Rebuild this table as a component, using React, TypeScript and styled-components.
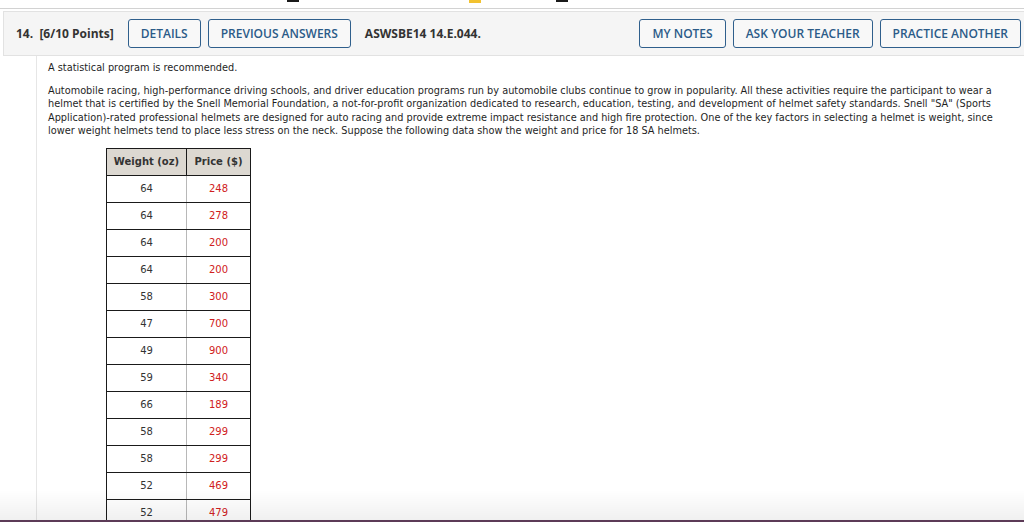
import styled, { createGlobalStyle } from "styled-components";

const rows: [number, number][] = [
  [64, 248],
  [64, 278],
  [64, 200],
  [64, 200],
  [58, 300],
  [47, 700],
  [49, 900],
  [59, 340],
  [66, 189],
  [58, 299],
  [58, 299],
  [52, 469],
  [52, 479],
  [49, 350],
  [62, 200],
];

const App = () => {
  return (
    <Page>
      <GlobalStyle />
      <TopStrip>
        <Mark $left={287} $color="#1a1a1a" />
        <Mark $left={170} $color="#f2c230" $tall />
        <Mark $left={75} $color="#1a1a1a" />
      </TopStrip>
      <Header>
        <Points>
          14.&nbsp;&nbsp;[6/10 Points]
        </Points>
        <ButtonGroup>
          <Button>DETAILS</Button>
          <Button>PREVIOUS ANSWERS</Button>
        </ButtonGroup>
        <Code>ASWSBE14 14.E.044.</Code>
        <ButtonGroup $right>
          <Button>MY NOTES</Button>
          <Button>ASK YOUR TEACHER</Button>
          <Button>PRACTICE ANOTHER</Button>
        </ButtonGroup>
      </Header>
      <Body>
        <Para>A statistical program is recommended.</Para>
        <Para>
          Automobile racing, high-performance driving schools, and driver education programs run by automobile clubs
          continue to grow in popularity. All these activities require the participant to wear a helmet that is certified
          by the Snell Memorial Foundation, a not-for-profit organization dedicated to research, education, testing, and
          development of helmet safety standards. Snell "SA" (Sports Application)-rated professional helmets are designed
          for auto racing and provide extreme impact resistance and high fire protection. One of the key factors in
          selecting a helmet is weight, since lower weight helmets tend to place less stress on the neck. Suppose the
          following data show the weight and price for 18 SA helmets.
        </Para>
        <Table>
          <thead>
            <tr>
              <Th $w={80}>Weight (oz)</Th>
              <Th $w={64}>Price ($)</Th>
            </tr>
          </thead>
          <tbody>
            {rows.map(([w, p], i) => (
              <tr key={i}>
                <Td>{w}</Td>
                <Td $red>{p}</Td>
              </tr>
            ))}
          </tbody>
        </Table>
      </Body>
      <BottomFade />
    </Page>
  );
};
export default App;

const GlobalStyle = createGlobalStyle`
  html, body {
    margin: 0;
    padding: 0;
    background: #ffffff;
    overflow: hidden;
  }
`;

const Page = styled.div`
  width: 1024px;
  height: 522px;
  overflow: hidden;
  position: relative;
  background: #ffffff;
`;

const TopStrip = styled.div`
  height: 8px;
  border-bottom: 1px solid #d2d2d2;
  display: flex;
  align-items: flex-start;
`;

const Mark = styled.span<{ $left: number; $color: string; $tall?: boolean }>`
  margin-left: ${(p) => p.$left}px;
  width: 12px;
  height: ${(p) => (p.$tall ? 3 : 2)}px;
  background: ${(p) => p.$color};
`;

const Header = styled.div`
  margin: 2px 0 0 3px;
  height: 45px;
  box-sizing: border-box;
  border: 1px solid #e2e2e2;
  border-right: none;
  background: #f5f5f5;
  display: flex;
  align-items: center;
  padding-left: 12px;
  font-family: "Open Sans", "Liberation Sans", sans-serif;
`;

const Points = styled.div`
  font-size: 12px;
  font-weight: 700;
  color: #333333;
  margin-right: 14px;
  white-space: nowrap;
`;

const ButtonGroup = styled.div<{ $right?: boolean }>`
  display: flex;
  gap: 7px;
  margin-left: ${(p) => (p.$right ? "auto" : "0")};
  margin-right: ${(p) => (p.$right ? "3px" : "0")};
`;

const Button = styled.button`
  height: 29px;
  padding: 0 12px;
  box-sizing: border-box;
  border: 1px solid #2f5f8c;
  border-radius: 3px;
  background: #f8f8f8;
  color: #2b5b88;
  font-family: "Open Sans", "Liberation Sans", sans-serif;
  font-size: 12px;
  font-weight: 600;
  white-space: nowrap;
  cursor: pointer;
`;

const Code = styled.div`
  margin-left: 14px;
  font-size: 12px;
  font-weight: 700;
  color: #333333;
  white-space: nowrap;
`;

const Body = styled.div`
  margin-left: 36px;
  border-left: 1px solid #e6e6e6;
  padding: 5px 14px 0 11px;
  min-height: 480px;
  font-family: "DejaVu Sans", Verdana, sans-serif;
  font-size: 9.75px;
  color: #1f1f1f;
`;

const Para = styled.p`
  margin: 0 0 9px;
  line-height: 13.6px;
`;

const Table = styled.table`
  margin: 10px 0 0 58px;
  border-collapse: collapse;
  font-family: "DejaVu Sans", Verdana, sans-serif;
  font-size: 10px;
`;

const Th = styled.th<{ $w: number }>`
  width: ${(p) => p.$w}px;
  height: 27px;
  box-sizing: border-box;
  padding: 0;
  background: #dcd8d1;
  color: #333333;
  font-weight: 700;
  text-align: center;
  border: 1px solid #1a1a1a;
  &:last-child {
    border-left-color: #b8b8b8;
  }
`;

const Td = styled.td<{ $red?: boolean }>`
  height: 26px;
  padding: 0;
  text-align: center;
  color: ${(p) => (p.$red ? "#d02020" : "#333333")};
  border-top: 1px solid #1a1a1a;
  border-bottom: 1px solid #1a1a1a;
  border-left: 1px solid ${(p) => (p.$red ? "#b8b8b8" : "#1a1a1a")};
  border-right: 1px solid ${(p) => (p.$red ? "#1a1a1a" : "#b8b8b8")};
`;

const BottomFade = styled.div`
  position: absolute;
  left: 0;
  right: 0;
  bottom: 0;
  height: 30px;
  background: linear-gradient(to bottom, rgba(0, 0, 0, 0) 0%, rgba(0, 0, 0, 0.06) 100%);
  border-bottom: 2px solid #5c3b57;
  pointer-events: none;
`;
